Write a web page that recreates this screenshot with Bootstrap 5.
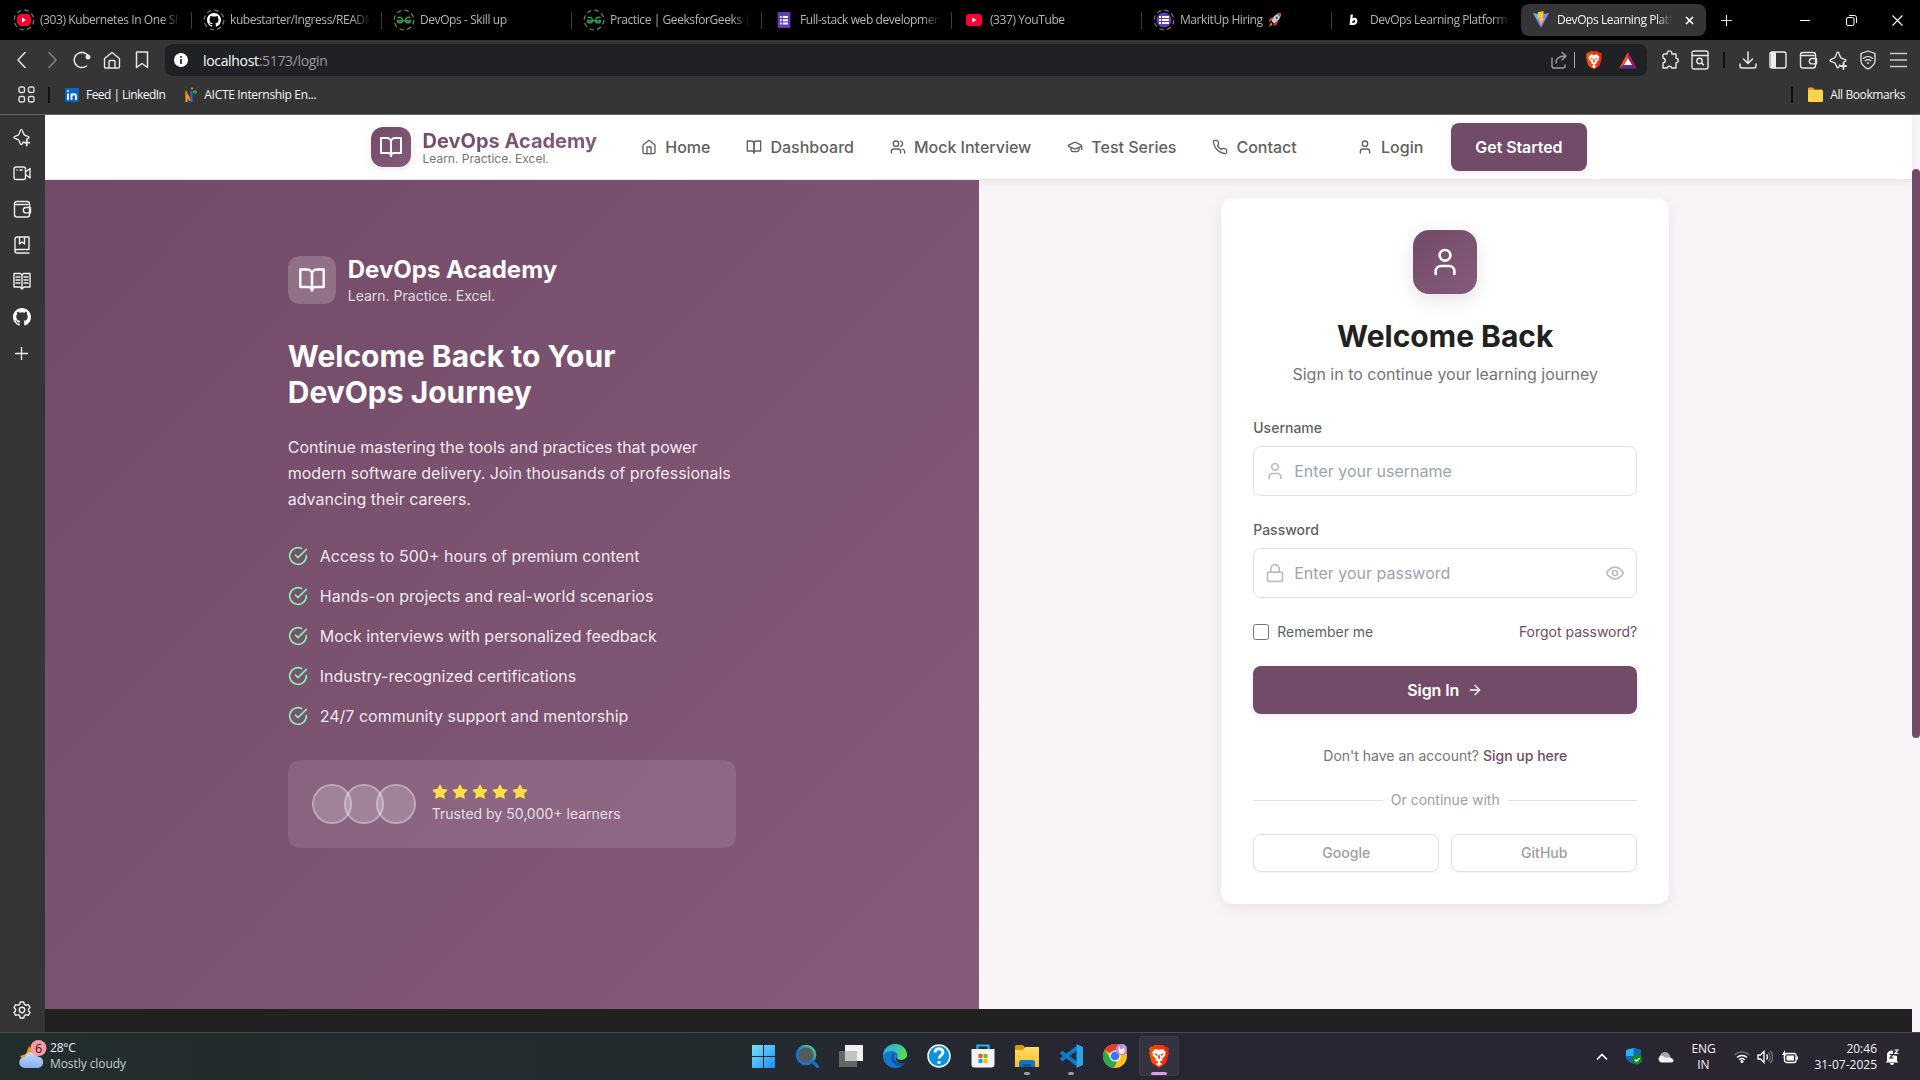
<!DOCTYPE html>
<html lang="en">
<head>
<meta charset="utf-8">
<meta name="viewport" content="width=device-width, initial-scale=1">
<title>DevOps Learning Platform</title>
<link href="https://cdn.jsdelivr.net/npm/bootstrap@5.3.0/dist/css/bootstrap.min.css" rel="stylesheet">
<style>
:root{--plum:#714b67;--plum2:#875a7b;--soft:#f8f4f7}
body{width:1920px;height:1080px;overflow:hidden;font-family:"Open Sans","Noto Sans",sans-serif;font-size:12px;background:#000}
svg{display:block;flex:none}
.ln{fill:none;stroke:currentColor;stroke-width:2;stroke-linecap:round;stroke-linejoin:round}
/* tab strip */
.tabstrip{height:40px;background:#000;color:#b4b4b4;padding-left:1px}
.tab{width:190px;padding-left:12px;position:relative}
.tab+.tab:not(.tab-on)::before{content:"";position:absolute;left:0;top:12px;width:1px;height:17px;background:#3c3c3c}
.tab-ic{width:22px;height:22px;margin-right:5px;flex:none}
.tab-tx{width:142px;overflow:hidden;white-space:nowrap;letter-spacing:-.42px;line-height:18px;-webkit-mask-image:linear-gradient(90deg,#000 86%,transparent 99%);mask-image:linear-gradient(90deg,#000 86%,transparent 99%)}
.tab-on{width:185px;height:32px;padding-left:9px;background:#353535;border-radius:8px;color:#f2f2f2}
.tab-on .tab-tx{width:116px}
.tab-x{margin-left:12px}
.winbtn{width:46px}
/* toolbar */
.toolrow{height:40px;background:#353535;color:#e6e6e6;padding:0 7px}
.cell{width:30px;height:32px;display:flex;align-items:center;justify-content:center;flex:none}
.omni{height:32px;width:1482px;margin:0 8px;padding-left:1px;background:#202124;border-radius:8px;font-size:14px}
.url{letter-spacing:-.33px;color:#fff;padding-left:7px}
.url span{color:#9a9a9a}
.omsep{width:1px;height:16px;background:#aaa}
.sep{width:2px;height:16px;background:#111}
.bmrow{height:35px;background:#353535;border-bottom:1px solid #666;color:#f5f5f5;letter-spacing:-.42px;padding:0 15px 5px 18px}
/* page frame */
.viewport{height:917px}
.side{width:45px;background:#353535;color:#eee;padding-top:4px;padding-bottom:4px}
.side .cell{width:43px;height:36px}
.site{font-family:Inter,sans-serif;font-size:16px;line-height:24px;background:var(--soft)}
.topnav{height:65px;background:#fff;border-bottom:1px solid #ece7eb;box-shadow:0 3px 8px rgba(113,75,103,.09);position:relative;z-index:1}
.topwrap{width:1216px;height:64px}
.gap12{gap:12px}
.grad{background:linear-gradient(135deg,var(--plum),var(--plum2));color:#fff}
.logo40{width:40px;height:40px;border-radius:12px;box-shadow:0 2px 8px rgba(113,75,103,.15)}
.brandname{font-weight:700;font-size:20px;line-height:24px;background:linear-gradient(135deg,var(--plum),var(--plum2));-webkit-background-clip:text;background-clip:text;color:transparent}
.brandsub{font-size:12px;line-height:12px;color:#757575}
.nlink{padding:8px 16px;color:#616161;font-weight:500;text-decoration:none}
.cta{background:var(--plum);color:#fff;font-weight:600;height:48px;border-radius:8px;letter-spacing:-.08px;box-shadow:0 2px 6px rgba(113,75,103,.12);border:0}
.cta:hover{background:var(--plum);color:#fff}
.hero{height:829px}
.panel-l{padding-top:74px;position:relative;z-index:2}
.w448{width:448px}
.logo48{width:48px;height:48px;border-radius:12px;background:rgba(255,255,255,.2)}
.brand24{font-size:24px;line-height:32px;font-weight:700}
.h30{font-size:30px;line-height:36px;font-weight:700;margin:0}
.feat{color:rgba(255,255,255,.9)}
.feat-list{margin:32px 0}
.feat-list .ln{color:#86efac}
.dim{color:rgba(255,255,255,.8)}
.trust{height:88px;border-radius:12px;background:rgba(255,255,255,.1);padding:24px}
.stars{color:#fde047}
.stars svg{fill:currentColor}
.face{width:40px;height:40px;border-radius:50%;background:rgba(255,255,255,.2);border:2px solid rgba(255,255,255,.3)}
.face+.face{margin-left:-8px}
.t14{font-size:14px;line-height:20px}
.logcard{height:706px;border:0;border-radius:12px;padding:32px;margin-top:18px;background:#fff;box-shadow:0 4px 14px rgba(113,75,103,.1)}
.logo64{width:64px;height:64px;border-radius:16px;box-shadow:0 6px 18px rgba(113,75,103,.17)}
.field{height:50px;border:1px solid #e0e0e0;border-radius:8px;padding:0 11px;color:#bdbdbd}
.field input{border:0;outline:0;background:none;flex:1;padding:0;margin-left:9px;font-size:16px}
.field input::placeholder{color:#9ca3af;opacity:1}
.flabel{color:#616161;font-weight:500}
.chk{width:16px;height:16px;margin:0;border:1px solid #767676;border-radius:2.5px;appearance:none;background:#fff}
.rule{height:1px;background:#e0e0e0;flex:1}
.soc{height:38px;border:1px solid #e0e0e0;border-radius:8px;color:#9e9e9e;font-weight:500;box-shadow:0 1px 2px rgba(0,0,0,.05);padding:0;flex:1}
.plumtx{color:var(--plum);text-decoration:none}
.foot{height:23px;background:#212121}
.track{width:8px;background:var(--soft);padding-top:54px}
.thumb{height:569px;border-radius:4px;background:var(--plum)}
/* taskbar */
.taskbar{height:48px;border-top:1px solid #4a4b50;background:linear-gradient(90deg,#222d2d 0,#232b2e 35%,#272633 62%,#2a2632 100%);color:#f4f4f4}
.weather{width:743px;padding:0 0 1px 18px}
.app{width:40px;height:40px;margin-right:4px;display:flex;align-items:center;justify-content:center;position:relative;border-radius:4px;margin-top:-1px}
.app-on{background:#353340;box-shadow:inset 0 0 0 1px #3e3b49}
.dot::after{content:"";position:absolute;bottom:1px;width:6px;height:3px;border-radius:2px;background:#9a9ba1}
.app-on.dot::after{width:16px;background:#dd9fe0}
.tray{padding-right:21px}
.l16{line-height:16px}
</style>
<script src="https://cdn.jsdelivr.net/npm/bootstrap@5.3.0/dist/js/bootstrap.bundle.min.js"></script>
</head>
<body class="d-flex flex-column">
<svg width="0" height="0" class="position-absolute">
<defs>
<linearGradient id="gv1" x1="0" y1="0" x2="1" y2="1"><stop offset="0" stop-color="#41d1ff"/><stop offset="1" stop-color="#bd34fe"/></linearGradient>
<linearGradient id="gw" x1="0" y1="0" x2="1" y2="1"><stop offset="0" stop-color="#7fdcff"/><stop offset="1" stop-color="#1593f5"/></linearGradient>
<linearGradient id="ge" x1="0" y1="0" x2="1" y2=".6"><stop offset="0" stop-color="#2aa7e8"/><stop offset=".5" stop-color="#35c1b6"/><stop offset="1" stop-color="#5fd84c"/></linearGradient>
<linearGradient id="gs" x1="0" y1="1" x2="1" y2="0"><stop offset=".4" stop-color="#1277d4"/><stop offset="1" stop-color="#4fe07c"/></linearGradient>
<linearGradient id="gf" x1="0" y1="0" x2="0" y2="1"><stop offset="0" stop-color="#ffdc66"/><stop offset="1" stop-color="#fbbd2a"/></linearGradient>
<linearGradient id="gc" x1="0" y1="0" x2="0" y2="1"><stop offset="0" stop-color="#c4dcfb"/><stop offset="1" stop-color="#86aef0"/></linearGradient>
<linearGradient id="gb" x1="0" y1="0" x2="1" y2="0"><stop offset="0" stop-color="#ff5500"/><stop offset="1" stop-color="#f2200c"/></linearGradient>
</defs>
<symbol id="book" viewBox="0 0 24 24"><path d="M2 3h6a4 4 0 0 1 4 4v14a3 3 0 0 0-3-3H2z"/><path d="M22 3h-6a4 4 0 0 0-4 4v14a3 3 0 0 1 3-3h7z"/></symbol>
<symbol id="user" viewBox="0 0 24 24"><path d="M19 21v-2a4 4 0 0 0-4-4H9a4 4 0 0 0-4 4v2"/><circle cx="12" cy="7" r="4"/></symbol>
<symbol id="house" viewBox="0 0 24 24"><path d="m3 9 9-7 9 7v11a2 2 0 0 1-2 2H5a2 2 0 0 1-2-2z"/><path d="M9 22V12h6v10"/></symbol>
<symbol id="users" viewBox="0 0 24 24"><path d="M16 21v-2a4 4 0 0 0-4-4H6a4 4 0 0 0-4 4v2"/><circle cx="9" cy="7" r="4"/><path d="M22 21v-2a4 4 0 0 0-3-3.87M16 3.13a4 4 0 0 1 0 7.75"/></symbol>
<symbol id="grad" viewBox="0 0 24 24"><path d="M21.42 10.922a1 1 0 0 0-.019-1.838L12.83 5.18a2 2 0 0 0-1.66 0L2.6 9.08a1 1 0 0 0 0 1.832l8.57 3.908a2 2 0 0 0 1.66 0zM22 10v6M6 12.5V16a6 3 0 0 0 12 0v-3.5"/></symbol>
<symbol id="phone" viewBox="0 0 24 24"><path d="M22 16.92v3a2 2 0 0 1-2.18 2 19.79 19.79 0 0 1-8.63-3.07 19.5 19.5 0 0 1-6-6 19.79 19.79 0 0 1-3.07-8.67A2 2 0 0 1 4.11 2h3a2 2 0 0 1 2 1.72 12.84 12.84 0 0 0 .7 2.81 2 2 0 0 1-.45 2.11L8.09 9.91a16 16 0 0 0 6 6l1.27-1.27a2 2 0 0 1 2.11-.45 12.84 12.84 0 0 0 2.81.7A2 2 0 0 1 22 16.92z"/></symbol>
<symbol id="check" viewBox="0 0 24 24"><path d="M22 11.08V12a10 10 0 1 1-5.93-9.14"/><path d="m9 11 3 3L22 4"/></symbol>
<symbol id="star" viewBox="0 0 24 24"><path d="m12 2 3.09 6.26L22 9.27l-5 4.87 1.18 6.88L12 17.77l-6.18 3.25L7 14.14 2 9.27l6.91-1.01z"/></symbol>
<symbol id="lock" viewBox="0 0 24 24"><rect x="3" y="11" width="18" height="11" rx="2"/><path d="M7 11V7a5 5 0 0 1 10 0v4"/></symbol>
<symbol id="eye" viewBox="0 0 24 24"><path d="M2 12s3-7 10-7 10 7 10 7-3 7-10 7-10-7-10-7Z"/><circle cx="12" cy="12" r="3"/></symbol>
<symbol id="arrow" viewBox="0 0 24 24"><path d="M5 12h14M12 5l7 7-7 7"/></symbol>
<symbol id="leo" viewBox="0 0 20 20"><path d="M15.8 12.2c.8-.6 2.2-1 2.2-1.9 0-1.3-3.900-1.100-5.200-2.700C11.500 6.200 11.200 2 9.800 2S8.300 6.200 6.900 7.600C5.400 9 2 9 2 10.400s3.500 1.300 4.900 2.700C8.300 14.500 8.400 18 9.800 18c1 0 1.300-1.700 1.900-3"/><path d="M15.500 13v6M12.800 16h5.400" stroke-width="1.800"/></symbol>
<symbol id="wallet" viewBox="0 0 20 20"><rect x="2.500" y="2.500" width="15" height="15.500" rx="2.500"/><path d="M3 5.500h13M18.500 8.500h-4.500a2.700 2.700 0 0 0 0 5.400h4.500z"/></symbol>
<symbol id="git" viewBox="0 0 16 16"><path d="M8 0C3.580 0 0 3.580 0 8c0 3.540 2.290 6.530 5.470 7.590.4.070.55-.17.55-.38 0-.19-.01-.82-.01-1.490-2.010.370-2.530-.490-2.690-.940-.090-.230-.480-.940-.820-1.130-.280-.150-.680-.520-.010-.530.630-.010 1.080.580 1.230.820.720 1.210 1.870.870 2.330.660.070-.520.280-.870.510-1.070-1.780-.200-3.640-.890-3.640-3.950 0-.870.310-1.590.820-2.150-.080-.200-.360-1.020.080-2.120 0 0 .670-.210 2.200.820a7.600 7.600 0 0 1 4 0c1.530-1.040 2.200-.820 2.200-.820.440 1.100.160 1.920.080 2.120.510.560.820 1.270.820 2.150 0 3.070-1.870 3.750-3.650 3.950.290.250.540.730.540 1.480 0 1.070-.010 1.930-.010 2.200 0 .210.150.460.550.380A8 8 0 0 0 16 8c0-4.420-3.580-8-8-8z"/></symbol>
<symbol id="brave" viewBox="0 0 20 24"><path fill="url(#gb)" d="M5.500 1h9l1.700 1.800 2-.2L20 5l-.7 2.200.5 2.100-2.300 8.500a4 4 0 0 1-1.700 2.300L10 24l-5.800-3.900a4 4 0 0 1-1.700-2.300L.2 9.300l.5-2.100L0 5l1.800-2.400 2 .2z"/><path fill="#fff" d="M6 5l4 .7L14 5l3 3.500-1 1.200.5 1.500-3.400 3.500.5 1.500-2.200 1-.6 1.200 2.300 1.600L10 22l-3.100-2 2.300-1.600-.6-1.200-2.200-1 .5-1.500-3.400-3.500.5-1.500L3 8.500z"/><path fill="#fb4a10" d="M5 9.300l3.500.8-.6 2.100zM15 9.300l-3.500.8.6 2.100zM9.300 11h1.400l.6 3.300-1.300.7-1.300-.7z"/></symbol>
<symbol id="ring" viewBox="0 0 22 22"><circle cx="11" cy="11" r="9.800" fill="none" stroke="#777" stroke-width="1.300" stroke-dasharray="4.500 3.200"/></symbol>
<symbol id="gfg" viewBox="0 0 22 22"><use href="#ring"/><g fill="none" stroke="#2f9a4c" stroke-width="1.500"><path d="M4.500 9.200c1.500-1.500 5-1 5 2.200 0 3.300-5 3-5 .3h13c0 2.700-5 3-5-.3 0-3.200 3.500-3.700 5-2.200"/></g></symbol>
<symbol id="form" viewBox="0 0 16 20"><rect width="16" height="20" rx="1.500" fill="#673ab7"/><path fill="#fff" d="M3 5h2v2.500H3zM6.500 5H13v2.500H6.500zM3 9h2v2.500H3zM6.500 9H13v2.500H6.500zM3 13h2v2.500H3zM6.500 13H13v2.500H6.500z"/></symbol>
<symbol id="yt" viewBox="0 0 16 12"><rect width="16" height="12" rx="3" fill="#ff0033"/><path fill="#fff" d="M6.300 3.500v5l4.200-2.500z"/></symbol>
</svg>

<!-- tabs -->
<div class="tabstrip d-flex align-items-center">
  <div class="tab d-flex align-items-center align-self-stretch"><svg class="tab-ic"><use href="#ring"/><rect x="4" y="5" width="14" height="12" rx="4.500" fill="#ff0033"/><path fill="#fff" d="M9 8.500v5l4-2.500z"/></svg><div class="tab-tx">(303) Kubernetes In One Shot</div></div>
  <div class="tab d-flex align-items-center align-self-stretch"><svg class="tab-ic"><use href="#ring"/><use href="#git" x="4" y="4" width="14" height="14" fill="#fff"/></svg><div class="tab-tx">kubestarter/Ingress/README.md</div></div>
  <div class="tab d-flex align-items-center align-self-stretch"><svg class="tab-ic"><use href="#gfg"/></svg><div class="tab-tx">DevOps - Skill up</div></div>
  <div class="tab d-flex align-items-center align-self-stretch"><svg class="tab-ic"><use href="#gfg"/></svg><div class="tab-tx">Practice | GeeksforGeeks | A</div></div>
  <div class="tab d-flex align-items-center align-self-stretch"><svg class="tab-ic"><use href="#form" x="3" y="3" width="16" height="16"/></svg><div class="tab-tx">Full-stack web development</div></div>
  <div class="tab d-flex align-items-center align-self-stretch"><svg class="tab-ic"><use href="#yt" x="3" y="5" width="16" height="12"/></svg><div class="tab-tx">(337) YouTube</div></div>
  <div class="tab d-flex align-items-center align-self-stretch"><svg class="tab-ic"><use href="#ring"/><circle cx="11" cy="11" r="7.500" fill="#673ab7"/><path fill="#fff" d="M6 7h2v2H6zM9 7h7v2H9zM6 10h2v2H6zM9 10h7v2H9zM6 13h2v2H6zM9 13h7v2H9z"/></svg><div class="tab-tx d-flex align-items-center">MarkitUp Hiring<svg style="margin-left:5px" width="14" height="16" viewBox="0 0 14 16"><path fill="#c9ccd2" d="M13 1C9 1 5 4 3.500 9l2.500 2.500C10 9.500 13 6 13 1z"/><path fill="#e0393e" d="M13 1c-1.500 0-3 .4-4 1l3 3c.6-1.200 1-2.500 1-4zM5 5L1.500 6.500 1 10l2.500-1zM10 8.500L9 12.500l-3.500 1.500.5-2.500z"/><path fill="#f59a23" d="M3 10.500l1.800 1.800L1 15z"/><circle cx="8.800" cy="5.800" r="1.400" fill="#3d6fa5"/></svg></div></div>
  <div class="tab d-flex align-items-center align-self-stretch"><svg class="tab-ic" viewBox="0 0 22 22"><path d="M8.800 5.500L7.800 14.800h2.700c3.300 0 3.500-5 1.200-5-1.400 0-2.200 1-2.500 2.200" fill="none" stroke="#fff" stroke-width="2.300"/></svg><div class="tab-tx">DevOps Learning Platform</div></div>
  <div class="tab tab-on d-flex align-items-center"><svg class="tab-ic" viewBox="0 0 22 22"><path fill="url(#gv1)" d="M3 4l8 15 8-15-8 1.500z"/><path fill="#ffc825" d="M13.500 2l-5.500 1.200-.4 6.300 2-.4-.6 3 1.800-.5-1 5.400 4.800-8-2.100.4.800-3z"/></svg><div class="tab-tx">DevOps Learning Platform</div><svg class="tab-x" width="9" height="9" viewBox="0 0 9 9" stroke="#fff" stroke-width="1.700"><path d="M1 1l7 7M8 1L1 8"/></svg></div>
  <svg style="margin-left:15px" width="11" height="11" viewBox="0 0 11 11" stroke="#ddd" stroke-width="1.200"><path d="M5.500 0v11M0 5.500h11"/></svg>
  <div class="ms-auto d-flex">
    <div class="winbtn d-flex justify-content-center align-items-center"><svg width="10" height="10" stroke="#fff"><path d="M0 5.500h10"/></svg></div>
    <div class="winbtn d-flex justify-content-center align-items-center"><svg width="11" height="11" fill="none" stroke="#fff"><rect x=".5" y="2.500" width="7.500" height="8" rx="1.500"/><path d="M3 .5h5.500a2 2 0 0 1 2 2V8"/></svg></div>
    <div class="winbtn d-flex justify-content-center align-items-center"><svg width="11" height="11" stroke="#fff" stroke-width="1.100"><path d="M.5.500l10 10M10.500.500l-10 10"/></svg></div>
  </div>
</div>

<!-- toolbar -->
<div class="toolrow d-flex align-items-center">
  <div class="cell"><svg class="ln" width="18" height="18" viewBox="0 0 18 18"><path style="stroke-width:1.5" d="M12 1.500L5 9l7 7.500"/></svg></div>
  <div class="cell"><svg class="ln" width="18" height="18" viewBox="0 0 18 18" color="#858585"><path style="stroke-width:1.5" d="M6 1.500L13 9l-7 7.500"/></svg></div>
  <div class="cell"><svg class="ln" width="18" height="18" viewBox="0 0 18 18"><path style="stroke-width:1.5" d="M13.500 15A7.600 7.600 0 1 1 16 6.500"/><circle cx="15" cy="6" r="1.500" fill="currentColor"/></svg></div>
  <div class="cell"><svg class="ln" width="18" height="18" viewBox="0 0 18 18"><path style="stroke-width:1.400" d="M1.500 7.500L9 1.500l7.500 6v8.500a1 1 0 0 1-1 1h-13a1 1 0 0 1-1-1zM6 17v-6.500a1 1 0 0 1 1-1h4a1 1 0 0 1 1 1V17"/></svg></div>
  <div class="cell"><svg class="ln" width="18" height="18" viewBox="0 0 18 18"><path style="stroke-width:1.500" d="M3.500 1h11v15.500L9 12.500l-5.500 4z"/></svg></div>
  <div class="omni d-flex align-items-center">
    <div class="cell"><svg width="14" height="14" viewBox="0 0 14 14"><circle cx="7" cy="7" r="7" fill="#fff"/><path d="M7 6v5M7 3v1.700" stroke="#202124" stroke-width="1.700"/></svg></div>
    <div class="url">localhost<span>:5173/login</span></div>
    <div class="cell ms-auto"><svg class="ln" width="16" height="18" viewBox="0 0 16 18" color="#9d9d9d"><path style="stroke-width:1.400" d="M1 7v8a2 2 0 0 0 2 2h9a2 2 0 0 0 2-2v-1M5 12c0-5 3-7 9-7M11 1.500L15 5l-4 4"/></svg></div>
    <div class="omsep"></div>
    <div class="cell ms-1"><svg width="16" height="20"><use href="#brave"/></svg></div>
    <div class="cell ms-1 me-1"><svg width="18" height="17" viewBox="0 0 18 17"><path fill="#ff4724" d="M9 0v6L5 13l-5 3.500z"/><path fill="#9e1f63" d="M9 0l9 16.500-5-3.500L9 6z"/><path fill="#662d91" d="M0 16.500L5 13h8l5 3.500z"/><path fill="#fff" d="M9 6l4 7H5z"/></svg></div>
  </div>
  <div class="cell"><svg class="ln" width="18" height="20" viewBox="0 0 18 20"><path style="stroke-width:1.400" d="M3 4h3.200a2.400 2.400 0 1 1 4.600 0H15v4.200a2.300 2.300 0 1 1 0 4.600V18h-4.200a2.400 2.400 0 0 0-4.600 0H2v-5.200a2.300 2.300 0 0 0 0-4.600V5z"/></svg></div>
  <div class="cell"><svg class="ln" width="18" height="20" viewBox="0 0 18 20"><g style="stroke-width:1.400"><rect x="1" y="1" width="16" height="18" rx="2"/><path d="M1 5.500h16"/><circle cx="8.500" cy="11" r="2.700"/><path d="M10.700 13l1.800 2"/></g></svg></div>
  <div class="cell" style="width:18px"><div class="sep"></div></div>
  <div class="cell"><svg class="ln" width="18" height="18" viewBox="0 0 18 18"><path style="stroke-width:1.500" d="M9 1v11M4.500 8L9 12.500 13.500 8M1 13v2a2 2 0 0 0 2 2h12a2 2 0 0 0 2-2v-2"/></svg></div>
  <div class="cell"><svg width="18" height="18" viewBox="0 0 18 18"><rect x="1" y="1" width="16" height="16" rx="2" fill="none" stroke="#eee" stroke-width="1.400"/><path fill="#eee" d="M2 1h5v16H2z"/></svg></div>
  <div class="cell"><svg class="ln" width="20" height="20" style="stroke-width:1.400"><use href="#wallet"/></svg></div>
  <div class="cell"><svg class="ln" width="20" height="20" style="stroke-width:1.400"><use href="#leo"/></svg></div>
  <div class="cell"><svg class="ln" width="16" height="20" viewBox="0 0 16 20"><g style="stroke-width:1.300"><path d="M8 1l7 2.500v7c0 4-4 7-7 8.500-3-1.500-7-4.500-7-8.500v-7z"/><path d="M3.500 8.300a7 7 0 0 1 9 0M5.200 10.700a4.500 4.500 0 0 1 5.600 0M7.500 13h1"/></g></svg></div>
  <div class="cell"><svg width="17" height="16" stroke="#ccc" stroke-width="1.700"><path d="M0 1.500h17M0 8h17M0 14.500h17"/></svg></div>
</div>
<div class="bmrow d-flex align-items-center">
  <svg width="17" height="17" fill="none" stroke="#ddd" stroke-width="1.400"><rect x="1" y="1" width="5.500" height="5.500" rx="1.500"/><rect x="10.500" y="1" width="5.500" height="5.500" rx="1.500"/><rect x="1" y="10.500" width="5.500" height="5.500" rx="1.500"/><rect x="10.500" y="10.500" width="5.500" height="5.500" rx="1.500"/></svg>
  <div class="sep" style="margin:0 15px 0 13px"></div>
  <svg width="14" height="14" viewBox="0 0 14 14"><rect width="14" height="14" rx="1" fill="#0a66c2"/><path d="M3 5.500V12M3 2.300v1.700M6.500 12V5.500M6.500 8.500c0-3 4.500-3 4.500 0V12" fill="none" stroke="#fff" stroke-width="1.800"/></svg>
  <span style="margin:0 20px 0 7px;letter-spacing:-.55px">Feed | LinkedIn</span>
  <svg width="12" height="16" viewBox="0 0 12 16" fill="none" stroke-width="2.200"><path stroke="#f7931e" d="M1.500 15V7l4 7"/><path stroke="#2563eb" d="M6.500 15V4"/><circle cx="7" cy="1.500" r="1" fill="#f7931e" stroke="none"/><path stroke="#3daa35" d="M8 5h4M10 3v4" stroke-width="1.500"/></svg>
  <span style="margin-left:7px;letter-spacing:-.32px">AICTE Internship En...</span>
  <div class="sep ms-auto" style="margin-right:15px"></div>
  <svg width="15" height="15" viewBox="0 0 15 15"><path fill="#e8a317" d="M0 1.500A1 1 0 0 1 1 .5h4l1.500 2H14V6H0z"/><rect y="3" width="15" height="12" rx="1" fill="#ffd24d"/></svg>
  <span style="margin-left:7px;letter-spacing:-.4px">All Bookmarks</span>
</div>

<!-- viewport -->
<div class="viewport d-flex">
  <div class="side d-flex flex-column">
    <div class="cell"><svg class="ln" width="19" height="20" style="stroke-width:1.400"><use href="#leo"/></svg></div>
    <div class="cell"><svg class="ln" width="18" height="16" viewBox="0 0 18 16"><g style="stroke-width:1.400"><rect x="1" y="2" width="11.500" height="12.500" rx="2"/><path d="M12.500 7l4.500-3.500v9.500L12.500 9.500M4 5h.1M7 5h2"/></g></svg></div>
    <div class="cell"><svg class="ln" width="20" height="20" style="stroke-width:1.400"><use href="#wallet"/></svg></div>
    <div class="cell"><svg class="ln" width="16" height="18" viewBox="0 0 16 18"><path style="stroke-width:1.400" d="M15 13.500V1H3a2 2 0 0 0-2 2v12a2 2 0 0 0 2 2h12M1 15a2 2 0 0 1 2-1.500h12M5.500 1v7L8 6l2.500 2V1"/></svg></div>
    <div class="cell"><svg class="ln" width="18" height="18" viewBox="0 0 18 18"><path style="stroke-width:1.400" d="M1 1.500h6.500L9 3l1.500-1.500H17v13.500h-6L9 17l-2-2H1zM9 3v13M3 5h4M3 8h4M3 11h4M11 5h4M11 8h4M11 11h4"/></svg></div>
    <div class="cell"><svg width="18" height="18" fill="#fff"><use href="#git"/></svg></div>
    <div class="cell"><svg width="13" height="13" stroke="#eee" stroke-width="1.300"><path d="M6.500 0v13M0 6.500h13"/></svg></div>
    <div class="cell mt-auto"><svg class="ln" width="18" height="18" viewBox="0 0 18 18"><g style="stroke-width:1.400"><path d="M7.300 1h3.400l.6 2.300 1.700 1 2.300-.7L17 6.500l-1.600 1.700v1.600L17 11.500l-1.700 2.900-2.300-.7-1.700 1-.6 2.300H7.300l-.6-2.300-1.700-1-2.300.7L1 11.500l1.600-1.700V8.200L1 6.500l1.700-2.900 2.300.7 1.700-1z"/><circle cx="9" cy="9" r="2.700"/></g></svg></div>
  </div>
  <div class="site flex-grow-1">
    <nav class="topnav d-flex justify-content-center">
      <div class="topwrap d-flex justify-content-between align-items-center">
        <div class="d-flex align-items-center gap12">
          <div class="logo40 grad d-flex align-items-center justify-content-center"><svg class="ln" width="24" height="24"><use href="#book"/></svg></div>
          <div><div class="brandname">DevOps Academy</div><div class="brandsub">Learn. Practice. Excel.</div></div>
        </div>
        <div class="d-flex gap-1">
          <a class="nlink d-flex align-items-center gap-2"><svg class="ln" width="16" height="16"><use href="#house"/></svg>Home</a>
          <a class="nlink d-flex align-items-center gap-2"><svg class="ln" width="16" height="16"><use href="#book"/></svg>Dashboard</a>
          <a class="nlink d-flex align-items-center gap-2"><svg class="ln" width="16" height="16"><use href="#users"/></svg>Mock Interview</a>
          <a class="nlink d-flex align-items-center gap-2"><svg class="ln" width="16" height="16"><use href="#grad"/></svg>Test Series</a>
          <a class="nlink d-flex align-items-center gap-2"><svg class="ln" width="16" height="16"><use href="#phone"/></svg>Contact</a>
        </div>
        <div class="d-flex align-items-center gap12">
          <a class="nlink d-flex align-items-center gap-2"><svg class="ln" width="16" height="16"><use href="#user"/></svg>Login</a>
          <button class="btn cta px-4">Get Started</button>
        </div>
      </div>
    </nav>
    <div class="hero d-flex">
      <section class="panel-l grad w-50 d-flex justify-content-center">
        <div class="w448">
          <div class="d-flex align-items-center gap12">
            <div class="logo48 d-flex align-items-center justify-content-center"><svg class="ln" width="28" height="28"><use href="#book"/></svg></div>
            <div><div class="brand24">DevOps Academy</div><div class="t14 dim">Learn. Practice. Excel.</div></div>
          </div>
          <h2 class="h30" style="margin:32px 0 24px">Welcome Back to Your<br>DevOps Journey</h2>
          <p class="feat mb-0" style="line-height:26px">Continue mastering the tools and practices that power modern software delivery. Join thousands of professionals advancing their careers.</p>
          <div class="feat feat-list d-flex flex-column gap-3">
            <div class="d-flex align-items-center gap12"><svg class="ln" width="20" height="20"><use href="#check"/></svg>Access to 500+ hours of premium content</div>
            <div class="d-flex align-items-center gap12"><svg class="ln" width="20" height="20"><use href="#check"/></svg>Hands-on projects and real-world scenarios</div>
            <div class="d-flex align-items-center gap12"><svg class="ln" width="20" height="20"><use href="#check"/></svg>Mock interviews with personalized feedback</div>
            <div class="d-flex align-items-center gap12"><svg class="ln" width="20" height="20"><use href="#check"/></svg>Industry-recognized certifications</div>
            <div class="d-flex align-items-center gap12"><svg class="ln" width="20" height="20"><use href="#check"/></svg>24/7 community support and mentorship</div>
          </div>
          <div class="trust d-flex gap-3">
            <div class="d-flex"><div class="face"></div><div class="face"></div><div class="face"></div></div>
            <div>
              <div class="stars d-flex gap-1 mb-1">
                <svg class="ln" style="fill:currentColor" width="16" height="16"><use href="#star"/></svg><svg class="ln" style="fill:currentColor" width="16" height="16"><use href="#star"/></svg><svg class="ln" style="fill:currentColor" width="16" height="16"><use href="#star"/></svg><svg class="ln" style="fill:currentColor" width="16" height="16"><use href="#star"/></svg><svg class="ln" style="fill:currentColor" width="16" height="16"><use href="#star"/></svg>
              </div>
              <div class="t14 dim">Trusted by 50,000+ learners</div>
            </div>
          </div>
        </div>
      </section>
      <section class="w-50 d-flex justify-content-center align-items-start">
        <div class="card logcard w448">
          <div class="logo64 grad d-flex align-items-center justify-content-center mx-auto"><svg class="ln" width="32" height="32"><use href="#user"/></svg></div>
          <h2 class="h30 text-center" style="margin:24px 0 8px;color:#212121">Welcome Back</h2>
          <div class="text-center" style="color:#757575;margin-bottom:32px">Sign in to continue your learning journey</div>
          <label class="t14 mb-2 flabel">Username</label>
          <div class="field d-flex align-items-center mb-4"><svg class="ln" width="20" height="20"><use href="#user"/></svg><input type="text" placeholder="Enter your username"></div>
          <label class="t14 mb-2 flabel">Password</label>
          <div class="field d-flex align-items-center mb-4"><svg class="ln" width="20" height="20"><use href="#lock"/></svg><input type="password" placeholder="Enter your password"><svg class="ln" width="20" height="20"><use href="#eye"/></svg></div>
          <div class="t14 d-flex align-items-center mb-4" style="color:#616161"><input type="checkbox" class="chk me-2">Remember me<a class="plumtx ms-auto">Forgot password?</a></div>
          <button class="btn cta d-flex align-items-center justify-content-center gap-2">Sign In<svg class="ln" width="16" height="16"><use href="#arrow"/></svg></button>
          <div class="t14 text-center" style="color:#757575;margin-top:32px">Don't have an account? <a class="plumtx" style="font-weight:500">Sign up here</a></div>
          <div class="t14 d-flex align-items-center gap-2 my-4" style="color:#9e9e9e"><div class="rule"></div>Or continue with<div class="rule"></div></div>
          <div class="d-flex gap12"><button class="btn soc t14">Google</button><button class="btn soc t14">GitHub</button></div>
        </div>
      </section>
    </div>
    <div class="foot"></div>
  </div>
  <div class="track"><div class="thumb"></div></div>
</div>

<!-- taskbar -->
<div class="taskbar d-flex align-items-center">
  <div class="weather d-flex align-items-center">
    <svg width="29" height="30" viewBox="0 0 29 30" style="margin-top:-4px"><path fill="#f59a1b" d="M2 17l6-2 3-8 5 8v9H7z"/><path fill="url(#gc)" d="M7 29a5.500 5.500 0 0 1-.5-11 7 7 0 0 1 13-.500A5.800 5.800 0 0 1 20.500 29z"/><circle cx="20.500" cy="9" r="8" fill="#ff99a4"/><text x="20.500" y="13.500" text-anchor="middle" font-size="12.500" fill="#1a1a1a">6</text></svg>
    <div class="l16" style="margin-left:3px"><div style="letter-spacing:-.2px">28°C</div><div style="color:#c9cccd;letter-spacing:-.07px">Mostly cloudy</div></div>
  </div>
  <div class="app"><svg width="23" height="23" fill="url(#gw)"><path d="M0 0h11v11H0zM12 0h11v11H12zM0 12h11v11H0zM12 12h11v11H12z"/></svg></div>
  <div class="app"><svg width="24" height="24" viewBox="0 0 24 24" fill="none"><circle cx="11" cy="11" r="9" fill="#555a62" stroke="url(#gs)" stroke-width="2.600"/><path d="M17.500 17.500l5 5" stroke="#1277d4" stroke-width="3" stroke-linecap="round"/></svg></div>
  <div class="app"><svg width="24" height="22" viewBox="0 0 24 22"><rect x="0" y="6" width="18" height="16" fill="#666"/><rect x="6" y="0" width="18" height="16" fill="#f1f1f1"/><path fill="#c3c3c3" d="M6 6h12v10H6z"/></svg></div>
  <div class="app"><svg width="24" height="24" viewBox="0 0 24 24"><circle cx="12" cy="12" r="12" fill="#1478cf"/><path fill="url(#ge)" d="M0 11C1 4 6 0 12 0c7 0 12 5 12 10.500 0 3.500-2.700 5.500-6 5.500-3 0-4.500-1-3.800-2.200C16 11 13.500 7 9 7c-4 0-7 1.500-9 4z"/><path fill="#0c4f9c" d="M9.500 9.500c-2.500 4-.5 11 5.500 12.500 3 .5 6-1 7.500-3-5 2-12-.5-12-6.500 0-1.300.4-2.300 1-3z"/><path fill="#242832" d="M14.200 13.800c-.7 1.200.8 2.200 3.800 2.200 2.700 0 5-1.300 5.800-3.600L24 19l-1.500 0c-4 1.800-9.500-.8-9.500-4.500z"/></svg></div>
  <div class="app"><svg width="24" height="24" viewBox="0 0 24 24"><circle cx="12" cy="12" r="11" fill="#0a93d8" stroke="#eef7fc" stroke-width="1.600"/><path d="M8 8.500C8 3.500 16 3.500 16 8.300c0 3-4 3-4 6.200M12 17v2.800" fill="none" stroke="#fff" stroke-width="2.900"/></svg></div>
  <div class="app"><svg width="24" height="24" viewBox="0 0 24 24"><path d="M6.500 7V1.500h11V7" fill="none" stroke="#28b1ef" stroke-width="2.200"/><path fill="#f3f3f3" d="M.5 5h23v15.500a3 3 0 0 1-3 3h-17a3 3 0 0 1-3-3z"/><path fill="#f25022" d="M7.500 10h4v4h-4z"/><path fill="#7fba00" d="M12.500 10h4v4h-4z"/><path fill="#00a4ef" d="M7.500 15h4v4h-4z"/><path fill="#ffb900" d="M12.500 15h4v4h-4z"/></svg></div>
  <div class="app dot"><svg width="24" height="22" viewBox="0 0 24 22"><path fill="#d99a0c" d="M0 1.500A1.500 1.500 0 0 1 1.500 0H8l2 2.500V6H0z"/><path fill="url(#gf)" d="M0 5h8l2.500-3H24v20H0z"/><path fill="#1273c4" d="M4 22v-4.500A2.500 2.500 0 0 1 6.500 15h11a2.500 2.500 0 0 1 2.500 2.500V22z"/><path fill="#0c5598" d="M8 19h8v3H8z"/></svg></div>
  <div class="app dot"><svg width="24" height="24" viewBox="0 0 24 24"><path fill="none" stroke="#0a7bc9" stroke-width="4" stroke-linejoin="round" d="M2 8l16 12M2 16L18 4"/><path fill="#2aa3ee" d="M17.500 0L24 3v18l-6.500 3z"/></svg></div>
  <div class="app"><svg width="24" height="24" viewBox="0 0 24 24"><circle cx="12" cy="12" r="12" fill="#fbc116"/><path fill="#e33b2e" d="M12 12L1.600 6A12 12 0 0 1 22.400 6H12z"/><path fill="#2da94f" d="M1.600 6L8 15l6 2.500-3 6.450A12 12 0 0 1 1.600 6z"/><circle cx="12" cy="12" r="5.600" fill="#fff"/><circle cx="12" cy="12" r="4.400" fill="#3279ee"/><circle cx="18.500" cy="5.500" r="5.800" fill="#b48be0"/><path fill="#fbe9d7" d="M16 1.500l1.500 3.500h2L21 1.500l.8 5.500c0 4-6.300 4-6.300 0z"/></svg></div>
  <div class="app app-on dot"><svg width="20" height="24"><use href="#brave"/></svg></div>
  <div class="tray ms-auto d-flex align-items-center">
    <svg width="12" height="8" fill="none" stroke="#fff" stroke-width="1.600" style="margin-right:18px"><path d="M1 6.500l5-5 5 5"/></svg>
    <svg width="17" height="17" viewBox="0 0 17 17" style="margin-right:14px"><path fill="#2fb0f0" d="M7.500 0L15 2v6c0 4-4 6-7.500 7.500C4 14 0 12 0 8V2z"/><path fill="#1267c0" d="M7.500 0L15 2v6H7.500zM0 8h7.500v7.500C4 14 0 12 0 8z"/><circle cx="11" cy="11.500" r="5" fill="#0f8a1c"/><path d="M8.700 11.500l1.800 1.800 3-3" fill="none" stroke="#fff" stroke-width="1.400"/></svg>
    <svg width="17" height="12" viewBox="0 0 17 12" style="margin-right:17px"><path fill="#a5a5a8" d="M3 7a5 5 0 0 1 10-2l2 5H3z"/><path fill="#f4f4f6" d="M4 11.500A3.700 3.700 0 0 1 4 4.500c2 0 3.500 1.500 5 2.500 1-.8 7-.8 7.500 2.500 0 1.200-1 2-2.500 2z"/></svg>
    <div class="text-center l16" style="width:24px;margin-right:19px;white-space:nowrap">ENG<br>IN</div>
    <svg width="16" height="13" viewBox="0 0 16 13" fill="none" stroke-width="1.500" style="margin-right:7px"><path stroke="#66646e" d="M.7 5a10.300 10.300 0 0 1 14.600 0"/><path stroke="#fff" d="M3 7.500a7 7 0 0 1 10 0M5.300 9.700a4 4 0 0 1 5.400 0"/><circle cx="8" cy="11.500" r="1.500" fill="#fff"/></svg>
    <svg width="16" height="14" viewBox="0 0 16 14" fill="none" stroke="#fff" stroke-width="1.300" style="margin-right:9px"><path d="M1 5v4h2.500L7 12.500v-11L3.500 5zM9.500 4.500a4 4 0 0 1 0 5"/><path stroke="#777" d="M11.500 2.500a7 7 0 0 1 0 9M13.500 1a9 9 0 0 1 0 12"/></svg>
    <svg width="17" height="14" viewBox="0 0 17 14" style="margin-right:15px"><rect x="2.500" y="3.500" width="11.500" height="9" rx="2" fill="none" stroke="#fff" stroke-width="1.300"/><path fill="#fff" d="M4.500 5.500h7.500v5H4.500zM14.500 6.500H16v3h-1.500zM3 0L0 5h2L1.500 8.500 5 3.500H3z"/></svg>
    <div class="text-end l16" style="margin-right:8px">20:46<br>31-07-2025</div>
    <svg width="14" height="16" viewBox="0 0 14 16"><path fill="#fff" d="M2 12V6a4.500 4.500 0 0 1 6-4.200V6l4 1v5l1.500 1.500H.5zM5 14h4a2 2 0 0 1-4 0z"/><path d="M4.500 5.500h3.500L5 9h3.500" fill="none" stroke="#2a2632" stroke-width="1.200"/><path d="M9.500 1h3.500L10 4.500h3.500" fill="none" stroke="#fff" stroke-width="1.200"/></svg>
  </div>
</div>
</body>
</html>
